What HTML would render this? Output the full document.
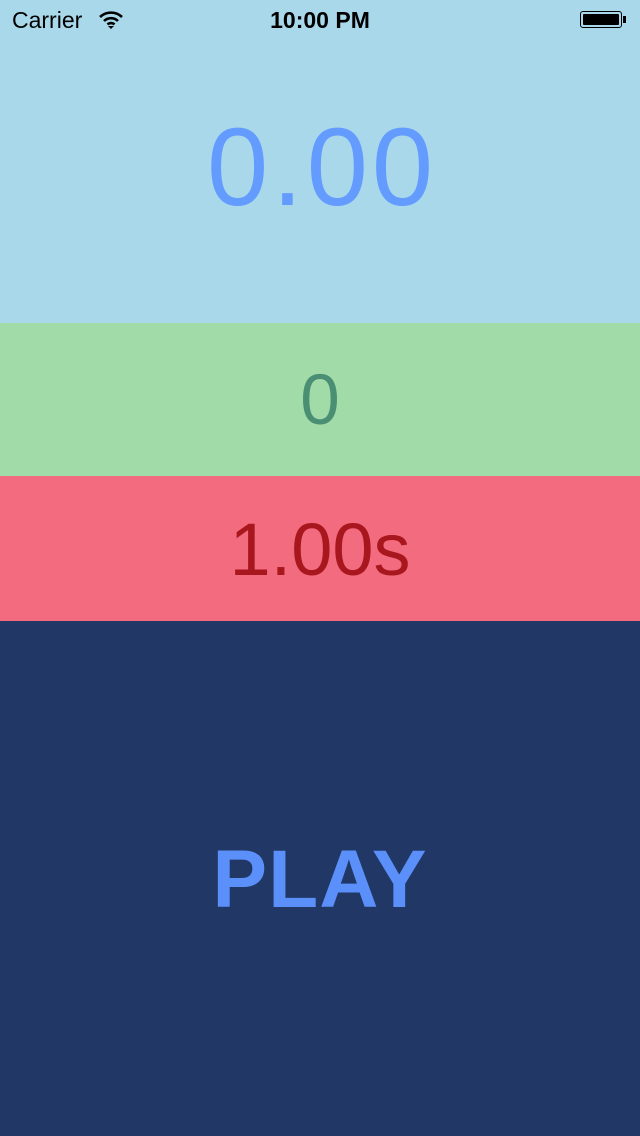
<!DOCTYPE html>
<html><head><style>
body{margin:0;width:640px;height:1136px;overflow:hidden;font-family:"Liberation Sans",sans-serif;}
div.s{position:absolute;left:0;width:640px;text-align:center;}
</style></head><body>
<div class="s" style="top:0;height:323px;background:#a8d8ea"></div>
<div class="s" style="top:323px;height:153px;background:#a0dba8"></div>
<div class="s" style="top:476px;height:145px;background:#f36b7f"></div>
<div class="s" style="top:621px;height:515px;background:#213866"></div>
<div style="position:absolute;left:12px;top:7px;font-size:23px;color:#000">Carrier</div>
<svg style="position:absolute;left:98px;top:10px" width="26" height="20" viewBox="0 0 26 20"><path d="M2 7a16 16 0 0 1 22 0M6 11a10 10 0 0 1 14 0M9.5 14.5a5 5 0 0 1 7 0" stroke="#000" stroke-width="2.6" fill="none"/><path d="M13 19l-3-3h6z" fill="#000"/></svg>
<div style="position:absolute;left:0;width:640px;text-align:center;top:7px;font-size:23px;font-weight:bold">10:00 PM</div>
<div style="position:absolute;left:580px;top:11px;width:42px;height:17px;border:1px solid #000;border-radius:3px;box-sizing:border-box;padding:2px"><div style="background:#000;width:100%;height:100%;border-radius:1px"></div></div>
<div style="position:absolute;left:623px;top:16px;width:3px;height:7px;background:#000"></div>
<div class="s" style="top:110px;font-size:110px;line-height:116px;color:#639bff;letter-spacing:4px;text-indent:4px">0.00</div>
<div class="s" style="top:363px;font-size:71px;line-height:76px;color:#4a8f74">0</div>
<div class="s" style="top:510px;font-size:74px;line-height:80px;color:#a8161e">1.00s</div>
<div class="s" style="top:836px;font-size:82px;line-height:88px;font-weight:bold;color:#5b8ff9;letter-spacing:1px">PLAY</div>
</body></html>
